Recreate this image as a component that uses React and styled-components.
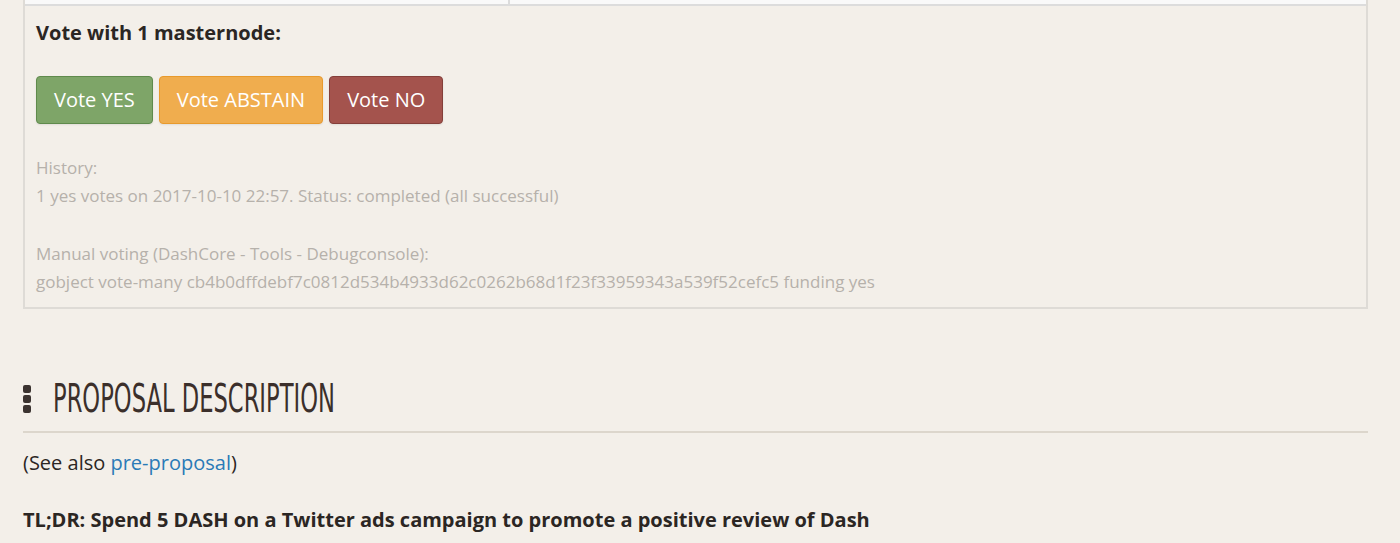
import styled, { createGlobalStyle } from "styled-components";

const GlobalStyle = createGlobalStyle`
  body {
    margin: 0;
    background: #f3efe9;
    font-family: "Open Sans", "Liberation Sans", sans-serif;
    color: #2b2623;
  }
`;

const Page = styled.div`
  padding: 0 32px 0 23px;
`;

const VoteBox = styled.div`
  border: 2px solid #dedbd6;
  border-top: none;
  padding: 0 0 11px;
`;

const TableStub = styled.div`
  display: grid;
  grid-template-columns: 483px 1fr;
  height: 4px;
  background: #f9f9f9;
  border-bottom: 2px solid #dcdcdc;

  & > div + div {
    border-left: 2px solid #dcdcdc;
  }
`;

const VoteInner = styled.div`
  padding: 14px 11px 0;
`;

const VoteTitle = styled.div`
  font-size: 20px;
  font-weight: 700;
  line-height: 26px;
`;

const ButtonRow = styled.div`
  display: flex;
  gap: 6px;
  margin-top: 30px;
`;

const tones = {
  yes: { bg: "#7ea568", border: "#5f8a4c" },
  abstain: { bg: "#f0ad4e", border: "#e89a2c" },
  no: { bg: "#a4534d", border: "#843f3a" },
};

const VoteButton = styled.button`
  font-family: "Open Sans", "Liberation Sans", sans-serif;
  font-size: 20px;
  line-height: 24px;
  padding: 11px 17px;
  color: #fff;
  background: ${(p) => tones[p.$tone].bg};
  border: 1px solid ${(p) => tones[p.$tone].border};
  border-radius: 4px;
  box-shadow: 0 1px 2px rgba(0, 0, 0, 0.08);
  cursor: pointer;
`;

const Muted = styled.p`
  margin: ${(p) => p.$top || 0}px 0 0;
  font-size: 17px;
  line-height: 28px;
  color: #b6b1ab;
`;

const SectionHead = styled.div`
  display: flex;
  align-items: center;
  gap: 22px;
  margin-top: 68px;
  padding-bottom: 10px;
  border-bottom: 2px solid #dcd6cc;
`;

const HeadTitle = styled.h2`
  margin: 0;
  font-family: "Liberation Sans Narrow", "DejaVu Sans Condensed", sans-serif;
  font-weight: 400;
  font-size: 39px;
  line-height: 44px;
  color: #3b2f2b;
  transform: scaleX(0.645);
  transform-origin: left center;
  white-space: nowrap;
`;

const Text = styled.p`
  margin: ${(p) => p.$top || 0}px 0 0;
  font-size: 20px;
  line-height: 26px;
  font-weight: ${(p) => (p.$bold ? 700 : 400)};
`;

const Link = styled.a`
  color: #2a7ab7;
  text-decoration: none;
`;

const Dots = () => (
  <svg width="8" height="28" viewBox="0 0 8 28">
    <rect x="0" y="0" width="8" height="8" rx="2" fill="#3b3330" />
    <rect x="0" y="10" width="8" height="8" rx="2" fill="#3b3330" />
    <rect x="0" y="20" width="8" height="8" rx="2" fill="#3b3330" />
  </svg>
);

export default function App() {
  return (
    <Page>
      <GlobalStyle />
      <VoteBox>
        <TableStub>
          <div />
          <div />
        </TableStub>
        <VoteInner>
          <VoteTitle>Vote with 1 masternode:</VoteTitle>
          <ButtonRow>
            <VoteButton $tone="yes">Vote YES</VoteButton>
            <VoteButton $tone="abstain">Vote ABSTAIN</VoteButton>
            <VoteButton $tone="no">Vote NO</VoteButton>
          </ButtonRow>
          <Muted $top={30}>
            History:
            <br />1 yes votes on 2017-10-10 22:57. Status: completed (all successful)
          </Muted>
          <Muted $top={30}>
            Manual voting (DashCore - Tools - Debugconsole):
            <br />
            gobject vote-many cb4b0dffdebf7c0812d534b4933d62c0262b68d1f23f33959343a539f52cefc5 funding yes
          </Muted>
        </VoteInner>
      </VoteBox>

      <SectionHead>
        <Dots />
        <HeadTitle>PROPOSAL DESCRIPTION</HeadTitle>
      </SectionHead>
      <Text $top={17}>
        (See also <Link href="#">pre-proposal</Link>)
      </Text>
      <Text $top={31} $bold>
        TL;DR: Spend 5 DASH on a Twitter ads campaign to promote a positive review of Dash
      </Text>
    </Page>
  );
}
